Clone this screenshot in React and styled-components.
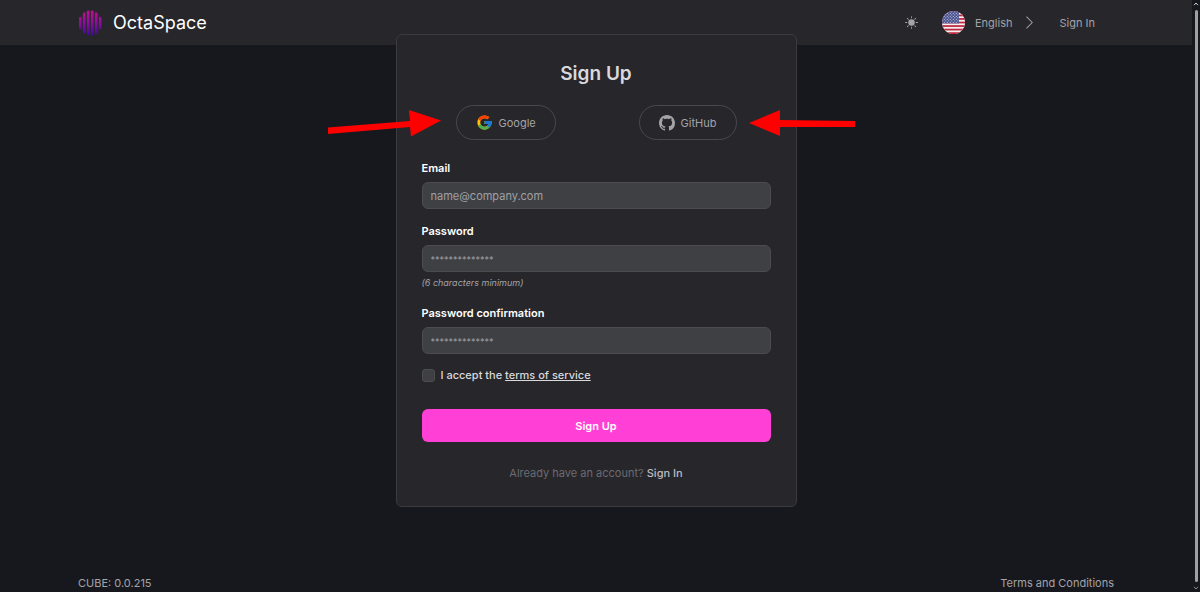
import styled, { createGlobalStyle } from "styled-components";
import { FcGoogle } from "react-icons/fc";
import { BsChevronRight, BsGithub, BsSunFill } from "react-icons/bs";

const LOGO_BARS = [
  { x: 1, y: 7, h: 12 },
  { x: 5, y: 2.5, h: 21 },
  { x: 9, y: 0.5, h: 25 },
  { x: 13, y: 0.5, h: 25 },
  { x: 17, y: 2.5, h: 21 },
  { x: 21, y: 7, h: 12 },
];

function Logo() {
  return (
    <svg width="25" height="26" viewBox="0 0 25 26" aria-hidden="true">
      <defs>
        <linearGradient id="logo" gradientUnits="userSpaceOnUse" x1="0" y1="0" x2="0" y2="26">
          <stop offset="0" stopColor="#c4128f" />
          <stop offset="0.5" stopColor="#8a0f9c" />
          <stop offset="1" stopColor="#3d0a94" />
        </linearGradient>
      </defs>
      <ellipse cx="12.4" cy="13" rx="11.5" ry="12.5" fill="url(#logo)" opacity="0.2" />
      {LOGO_BARS.map((bar) => (
        <rect key={bar.x} x={bar.x} y={bar.y} width="2.4" height={bar.h} rx="1.2" fill="url(#logo)" />
      ))}
    </svg>
  );
}

function Flag() {
  return (
    <svg width="23" height="23" viewBox="0 0 23 23" aria-hidden="true">
      <defs>
        <clipPath id="flag">
          <circle cx="11.5" cy="11.5" r="11.5" />
        </clipPath>
        <pattern id="stars" width="3" height="3" patternUnits="userSpaceOnUse">
          <circle cx="0.8" cy="0.8" r="0.6" fill="#c9cbe0" />
          <circle cx="2.3" cy="2.3" r="0.6" fill="#c9cbe0" />
        </pattern>
      </defs>
      <g clipPath="url(#flag)">
        <rect width="23" height="23" fill="#f3f0f2" />
        {[0, 1, 2, 3, 4, 5, 6].map((i) => (
          <rect key={i} y={i * 3.54} width="23" height="1.77" fill="#c0283f" />
        ))}
        <rect width="17" height="12.4" fill="#48508e" />
        <rect width="17" height="12.4" fill="url(#stars)" />
      </g>
    </svg>
  );
}

function Field({ id, label, hint, ...input }) {
  return (
    <FieldGroup>
      <FieldLabel htmlFor={id}>{label}</FieldLabel>
      <TextInput id={id} name={id} {...input} />
      {hint && <Hint>{hint}</Hint>}
    </FieldGroup>
  );
}

function App() {
  return (
    <>
      <GlobalStyle />
      <Shell>
        <Page>
          <Header>
            <Brand href="#">
              <Logo />
              OctaSpace
            </Brand>
            <Nav>
              <ThemeButton type="button" aria-label="Toggle theme">
                <BsSunFill size={13} />
              </ThemeButton>
              <LanguageButton type="button">
                <Flag />
                English
                <BsChevronRight size={15} />
              </LanguageButton>
              <NavLink href="#">Sign In</NavLink>
            </Nav>
          </Header>

          <Card>
            <Title>Sign Up</Title>
            <SocialRow>
              <SocialButton type="button">
                <FcGoogle size={17} />
                Google
              </SocialButton>
              <SocialButton type="button">
                <BsGithub size={16} />
                GitHub
              </SocialButton>
            </SocialRow>
            <Form onSubmit={(e) => e.preventDefault()}>
              <Field id="email" label="Email" type="email" placeholder="name@company.com" />
              <Field
                id="password"
                label="Password"
                type="password"
                placeholder="**************"
                hint="(6 characters minimum)"
              />
              <Field
                id="confirmation"
                label="Password confirmation"
                type="password"
                placeholder="**************"
              />
              <Terms>
                <Checkbox id="terms" type="checkbox" />
                <label htmlFor="terms">
                  I accept the <a href="#">terms of service</a>
                </label>
              </Terms>
              <SubmitButton type="submit">Sign Up</SubmitButton>
            </Form>
            <Already>
              Already have an account? <a href="#">Sign In</a>
            </Already>

            <LeftArrow width="114" height="28" viewBox="0 0 114 28" aria-hidden="true">
              <path d="M0 18.5 82 12 81 1 113 11.5 83 27.5 82 18 0 25Z" fill="#fe0000" />
            </LeftArrow>
            <RightArrow width="108" height="28" viewBox="0 0 108 28" aria-hidden="true">
              <path d="M0 13 31 0 31 10 106 11 106 17 31 17 31 26Z" fill="#fe0000" />
            </RightArrow>
          </Card>

          <Footer>
            <span>CUBE: 0.0.215</span>
            <a href="#">Terms and Conditions</a>
          </Footer>
        </Page>
        <ScrollTrack aria-hidden="true">
          <svg width="6" height="4" viewBox="0 0 6 4">
            <path d="M1 3.2 3 1 5 3.2" fill="none" stroke="#d0d0d2" />
          </svg>
          <ScrollThumb />
          <svg width="6" height="4" viewBox="0 0 6 4">
            <path d="M1 0.8 3 3 5 0.8" fill="none" stroke="#8d8d92" />
          </svg>
        </ScrollTrack>
      </Shell>
    </>
  );
}

export default App;

const GlobalStyle = createGlobalStyle`
  * {
    box-sizing: border-box;
  }
  body {
    margin: 0;
    background: #17181d;
    color: #a3a3a8;
    font: 11px/16px Inter, "Liberation Sans", sans-serif;
  }
  button, input {
    font: inherit;
    color: inherit;
  }
  a {
    color: inherit;
    text-decoration: none;
  }
  svg {
    flex: none;
  }
`;

const Shell = styled.div`
  display: flex;
  min-height: 100vh;
`;

const Page = styled.div`
  flex: 1;
  display: flex;
  flex-direction: column;
`;

const Header = styled.header`
  display: flex;
  align-items: center;
  justify-content: space-between;
  height: 45px;
  padding: 0 78px;
  background: #27262b;
`;

const Brand = styled.a`
  display: flex;
  align-items: center;
  gap: 10px;
  color: #fff;
  font-size: 18px;
  line-height: 24px;
`;

const Nav = styled.nav`
  display: flex;
  align-items: center;
`;

const ThemeButton = styled.button`
  display: flex;
  padding: 0;
  border: 0;
  background: none;
`;

const LanguageButton = styled.button`
  display: flex;
  align-items: center;
  gap: 10px;
  margin: 0 22px 0 24px;
  padding: 0;
  border: 0;
  background: none;
`;

const NavLink = styled.a`
  padding-right: 19px;
`;

const Card = styled.main`
  position: relative;
  z-index: 1;
  align-self: center;
  width: 100%;
  max-width: 401px;
  margin-top: -11px;
  padding: 27px 25px 25px;
  border: 1px solid #3a3a3f;
  border-radius: 6px;
  background: #27262b;
`;

const Title = styled.h1`
  margin: 0;
  color: #d9d9dd;
  font-size: 19px;
  line-height: 24px;
  font-weight: 600;
  text-align: center;
`;

const SocialRow = styled.div`
  display: flex;
  justify-content: space-between;
  margin: 19px 0 20px;
  padding: 0 34px;
`;

const SocialButton = styled.button`
  display: flex;
  align-items: center;
  gap: 6px;
  height: 35px;
  padding: 0 19px;
  border: 1px solid #48484d;
  border-radius: 18px;
  background: none;
`;

const Form = styled.form`
  display: flex;
  flex-direction: column;
  gap: 14px;
`;

const FieldGroup = styled.div`
  display: flex;
  flex-direction: column;
`;

const FieldLabel = styled.label`
  margin-bottom: 6px;
  color: #fff;
  font-weight: 600;
`;

const TextInput = styled.input`
  width: 100%;
  height: 27px;
  padding: 0 8px;
  border: 1px solid #4b4b50;
  border-radius: 6px;
  background: #3f4044;
  &::placeholder {
    color: #a0a0a5;
    opacity: 1;
  }
  &[type="password"]::placeholder {
    font-size: 9px;
  }
`;

const Hint = styled.small`
  margin-top: 3px;
  font-size: 9px;
  font-style: italic;
`;

const Terms = styled.div`
  display: flex;
  align-items: center;
  gap: 6px;
  height: 14px;
  color: #d9d9dd;
  font-weight: 500;
  & a {
    text-decoration: underline;
  }
`;

const Checkbox = styled.input`
  appearance: none;
  width: 13px;
  height: 13px;
  margin: 0;
  border: 1px solid #4b4b50;
  border-radius: 3px;
  background: #3f4044;
  &:checked {
    background: #ff3fd5;
  }
`;

const SubmitButton = styled.button`
  height: 33px;
  margin-top: 13px;
  border: 0;
  border-radius: 6px;
  background: #ff3fd5;
  color: #fff;
  font-weight: 600;
`;

const Already = styled.p`
  margin: 23px 0 0;
  color: #6b6b71;
  text-align: center;
  & a {
    color: #bcbcc1;
    font-weight: 500;
  }
`;

const LeftArrow = styled.svg`
  position: absolute;
  top: 74px;
  right: 354px;
`;

const RightArrow = styled.svg`
  position: absolute;
  top: 75px;
  left: 352px;
`;

const Footer = styled.footer`
  display: flex;
  justify-content: space-between;
  margin-top: auto;
  padding: 0 78px 1px;
`;

const ScrollTrack = styled.div`
  position: sticky;
  top: 0;
  display: flex;
  flex-direction: column;
  align-items: center;
  gap: 4px;
  width: 8px;
  height: 100vh;
  padding: 2px 0;
  background: #17181d;
`;

const ScrollThumb = styled.div`
  flex: 1;
  width: 3px;
  border-radius: 2px;
  background: #9f9fa4;
`;
